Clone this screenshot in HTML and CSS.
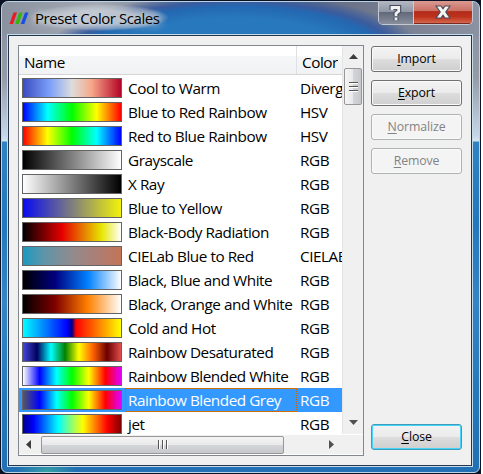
FILE: index.html
```html
<!DOCTYPE html>
<html lang="en">
<head>
<meta charset="utf-8">
<title>Preset Color Scales</title>
<link rel="stylesheet" href="styles.css">
</head>
<body>
<div class="window">
  <div class="frame">
    <header class="titlebar">
      <svg class="logo" width="20" height="13" viewBox="0 0 20 13">
        <path d="M4.5 0.5H8L4 12H0.5Z" fill="#e81c24"/>
        <path d="M10.2 0.5H13.7L9.7 12H6.2Z" fill="#35b40c"/>
        <path d="M16 0.5H19.5L15.3 12H11.8Z" fill="#164fe0"/>
      </svg>
      <h1 class="title">Preset Color Scales</h1>
      <div class="caption">
        <span class="cap help"><svg width="14" height="18" viewBox="0 0 14 18"><path d="M3 6V3.5H9.7V7.4L7 9.5V12M7 13.5V16.3" fill="none" stroke="#454b59" stroke-width="5"/><path d="M3 6V3.5H9.7V7.4L7 9.5V12M7 13.5V16.3" fill="none" stroke="#f1f1f1" stroke-width="2.8"/></svg></span>
        <span class="cap exit"><svg width="16" height="14" viewBox="0 0 16 14"><path d="M1 1H6L8 3.7L10 1H15L10.8 7L15 13H10L8 10.3L6 13H1L5.2 7Z" fill="#f4f4f4" stroke="#4b4a56" stroke-width="1.2"/></svg></span>
      </div>
    </header>
    <main class="client">
      <section class="tree">
        <div class="view">
          <div class="head"><span class="hname">Name</span><span class="hspace">Color</span></div>
          <div class="rows">
            <div class="row"><i class="sw cool"></i><span class="name">Cool to Warm</span><span class="space">Diverging</span></div>
            <div class="row"><i class="sw bred"></i><span class="name">Blue to Red Rainbow</span><span class="space">HSV</span></div>
            <div class="row"><i class="sw rblue"></i><span class="name">Red to Blue Rainbow</span><span class="space">HSV</span></div>
            <div class="row"><i class="sw gray"></i><span class="name">Grayscale</span><span class="space">RGB</span></div>
            <div class="row"><i class="sw xray"></i><span class="name">X Ray</span><span class="space">RGB</span></div>
            <div class="row"><i class="sw byel"></i><span class="name">Blue to Yellow</span><span class="space">RGB</span></div>
            <div class="row"><i class="sw body"></i><span class="name">Black-Body Radiation</span><span class="space">RGB</span></div>
            <div class="row"><i class="sw cie"></i><span class="name">CIELab Blue to Red</span><span class="space">CIELAB</span></div>
            <div class="row"><i class="sw bbw"></i><span class="name">Black, Blue and White</span><span class="space">RGB</span></div>
            <div class="row"><i class="sw bow"></i><span class="name">Black, Orange and White</span><span class="space">RGB</span></div>
            <div class="row"><i class="sw cold"></i><span class="name">Cold and Hot</span><span class="space">RGB</span></div>
            <div class="row"><i class="sw desat"></i><span class="name">Rainbow Desaturated</span><span class="space">RGB</span></div>
            <div class="row"><i class="sw rwhite"></i><span class="name">Rainbow Blended White</span><span class="space">RGB</span></div>
            <div class="row selected"><i class="sw rgrey"></i><span class="name">Rainbow Blended Grey</span><span class="space">RGB</span></div>
            <div class="row"><i class="sw jet"></i><span class="name">jet</span><span class="space">RGB</span></div>
          </div>
        </div>
        <div class="vbar">
          <svg width="9" height="5" viewBox="0 0 9 5"><path d="M0 5L4.5 0L9 5Z" fill="#3c3c3c"/></svg>
          <div class="vthumb"><i></i><i></i><i></i></div>
          <svg class="down" width="9" height="5" viewBox="0 0 9 5"><path d="M0 0L4.5 5L9 0Z" fill="#505050"/></svg>
        </div>
        <div class="hbar">
          <svg width="5" height="9" viewBox="0 0 5 9"><path d="M5 0L0 4.5L5 9Z" fill="#3c3c3c"/></svg>
          <div class="hthumb"><i></i><i></i><i></i></div>
          <svg class="right" width="5" height="9" viewBox="0 0 5 9"><path d="M0 0L5 4.5L0 9Z" fill="#505050"/></svg>
        </div>
        <div class="corner"></div>
      </section>
      <aside class="actions">
        <button class="btn"><u>I</u>mport</button>
        <button class="btn"><u>E</u>xport</button>
        <button class="btn" disabled><u>N</u>ormalize</button>
        <button class="btn" disabled><u>R</u>emove</button>
        <button class="btn default"><u>C</u>lose</button>
      </aside>
    </main>
  </div>
</div>
</body>
</html>
```
FILE: styles.css
```css
* { box-sizing: border-box; }
body { margin: 0; background: #fff; font-family: "Open Sans", "Noto Sans", sans-serif; color: #000; overflow: hidden; }
.window { width: 481px; height: 474px; padding: 1px; background: #0b1224; }
.frame {
  width: 479px; height: 472px; padding: 0 6px 5px 5px;
  border: 1px solid #b9d4e6; border-radius: 7px 7px 6px 6px;
  background:
    radial-gradient(ellipse 190px 62px at 233px 53px, #2878bd 0 60%, #2368b2 78%, #3a5c9e 86%, transparent 100%) 0 0 / 100% 34px no-repeat,
    linear-gradient(90deg, #8a919f 0, #a4aab4 20%, #6f778c 38%, #626a82 65%, #777e91 82%, #8b92a2 100%) 0 0 / 100% 34px no-repeat,
    radial-gradient(ellipse 30px 12px at 45px 470px, #35a2a4, transparent),
    linear-gradient(180deg, #888f9f 0, #959aa6 75px, #c6d7e8 134px, #d4e5f1 139px, #3082c2 140px, #2278bd 220px, #3584c5 300px, #2378ba 400px, #226fb4 100%);
}
.titlebar { display: flex; height: 32px; padding-left: 2px; }
.logo { margin-top: 10px; }
.title {
  margin: 2px 0 3px; padding: 0 10px 0 6px; font-size: 15px; line-height: 28px; font-weight: 400; white-space: nowrap;
  letter-spacing: -.44px; height: 27px;
  background: radial-gradient(closest-side, rgba(200,206,214,.85) 0 50%, rgba(190,198,208,.45) 85%, transparent);
  text-shadow: 0 0 6px #cdd3db, 0 0 8px #c6ced7, 0 0 10px #c6ced7;
}
.caption { display: flex; margin: -1px 0 0 auto; width: 95px; height: 24px; border: 1px solid #c4c8d1; border-top: 0; border-radius: 0 0 5px 5px; overflow: hidden; }
.cap { display: flex; align-items: center; justify-content: center; }
.help { width: 35px; border-right: 1px solid #cbcdd3; background: linear-gradient(#b3b8c3 0, #8e95a4 48%, #62697a 50%, #888e9d 100%); }
.exit { flex: 1; background: linear-gradient(#d99a91 0, #cb7064 45%, #b32d1b 48%, #bd301b 70%, #d3664b 100%); border-bottom: 1px solid #7a2a23; }
.client { display: flex; width: 466px; height: 433px; border: 1px solid #c5dce9; outline: 1px solid #23354f; outline-offset: -2px; padding: 10px 9px 9px 10px; background: #f0f0f0; gap: 7px; }
.tree { display: grid; grid-template: 389px 19px / 323px 21px; width: 346px; height: 411px; border: 1px solid #828790; background: #fff; }
.view { overflow: hidden; font-size: 15.3px; letter-spacing: -.46px; }
.head { display: flex; height: 29px; width: 323px; line-height: 32px; border-bottom: 1px solid #d5d5d5; background: linear-gradient(#fff 0 34%, #f5f6f8 38%, #f1f2f4 100%); }
.hname { width: 278px; padding-left: 5px; border-right: 1px solid #dfe0e3; }
.hspace { padding-left: 5px; overflow: hidden; white-space: nowrap; }
.rows { padding-top: 1px; }
.row { display: flex; align-items: center; width: 323px; height: 24px; padding-left: 3px; white-space: nowrap; }
.sw { width: 100px; height: 20px; margin-right: 3px; border: 1px solid #646464; flex: none; }
.name { width: 172px; height: 24px; padding-left: 2px; border: 1px solid transparent; line-height: 23px; flex: none; margin-right: 3px; }
.space { flex: 1; overflow: hidden; line-height: 25px; }
.selected { background: #3399ff; color: #fff; }
.selected .name { border: 1px dotted #cc6600; }
.cool { background: linear-gradient(90deg, #3b4cc0, #7b9ff9 27%, #dddddd 50%, #f7a789 70%, #b40426); }
.bred { background: linear-gradient(90deg, blue, cyan 25%, lime 50%, yellow 75%, red); }
.rblue { background: linear-gradient(90deg, red, yellow 25%, lime 50%, cyan 75%, blue); }
.gray { background: linear-gradient(90deg, #000, #fff); }
.xray { background: linear-gradient(90deg, #fff, #000); }
.byel { background: linear-gradient(90deg, #0a0af2, #f2f20a); }
.body { background: linear-gradient(90deg, #000, #e60000 40%, #e6e600 80%, #fff); }
.cie { background: linear-gradient(90deg, #1a99c0, #5c95aa 20%, #918b8d 50%, #ab7f76 75%, #c37455); }
.bbw { background: linear-gradient(90deg, #000, #000080 33%, #0080ff 66%, #fff); }
.bow { background: linear-gradient(90deg, #000, #800000 33%, #ff8000 66%, #fff); }
.cold { background: linear-gradient(90deg, cyan, blue 45%, #000080 50%, red 54%, yellow); }
.desat { background: linear-gradient(90deg, #4747db, #00005c 14.3%, cyan 28.5%, #008000 42.9%, yellow 57%, #ff6100 71.4%, #6b0000 85.7%, #e04c4c); }
.rwhite { background: linear-gradient(90deg, #fff, blue 17%, cyan 34%, lime 50%, yellow 67%, red 84%, #e000ff); }
.rgrey { background: linear-gradient(90deg, #545766, blue 17%, cyan 34%, lime 50%, yellow 67%, red 84%, #e000ff); }
.jet { background: linear-gradient(90deg, #000090, blue 11%, cyan 36%, #80ff80 48%, yellow 61%, red 86%, #800000); }
.vbar { display: flex; flex-direction: column; align-items: center; height: 388px; padding: 8px 0 9px; border-left: 1px solid #e4e4e4; background: #f0f0f0; }
.vthumb { width: 18px; height: 37px; margin-top: 9px; border: 1px solid #979797; border-radius: 2px; background: linear-gradient(90deg, #f5f5f5, #e9e9eb 48%, #d4d5d8 52%, #c7c8cc); display: flex; flex-direction: column; align-items: center; justify-content: center; gap: 2px; }
.vthumb i { width: 9px; height: 2px; border-top: 1px solid #555; border-bottom: 1px solid #fff; }
.down { margin-top: auto; }
.hbar { display: flex; align-items: center; width: 323px; height: 19px; padding: 0 8px 0 7px; background: #f0f0f0; }
.hthumb { width: 243px; height: 18px; margin-left: 10px; border: 1px solid #979797; border-radius: 2px; background: linear-gradient(#f5f5f5, #e9e9eb 48%, #d4d5d8 52%, #c7c8cc); display: flex; align-items: center; justify-content: center; gap: 2px; }
.hthumb i { width: 2px; height: 9px; border-left: 1px solid #555; border-right: 1px solid #fff; }
.right { margin-left: auto; }
.corner { background: #f0f0f0; }
.actions { display: flex; flex-direction: column; width: 92px; gap: 8px; height: 405px; padding-top: 1px; flex: none; }
.btn { width: 91px; height: 26px; flex: none; padding: 0; border: 1px solid #707070; border-radius: 3px; font: 12.3px/24px "Open Sans", "Noto Sans", sans-serif; letter-spacing: -.1px; color: #000; background: linear-gradient(#f3f3f3, #ebebeb 49%, #dddddd 50%, #cfcfcf); box-shadow: inset 0 0 0 1px #fafafa; }
.btn:disabled { color: #838383; border-color: #adb2b5; background: #f4f4f4; }
.btn u { text-underline-offset: 2px; }
.default { margin-top: auto; border-color: #3c9cba; box-shadow: inset 0 0 0 1px #48d4fa; }
```
